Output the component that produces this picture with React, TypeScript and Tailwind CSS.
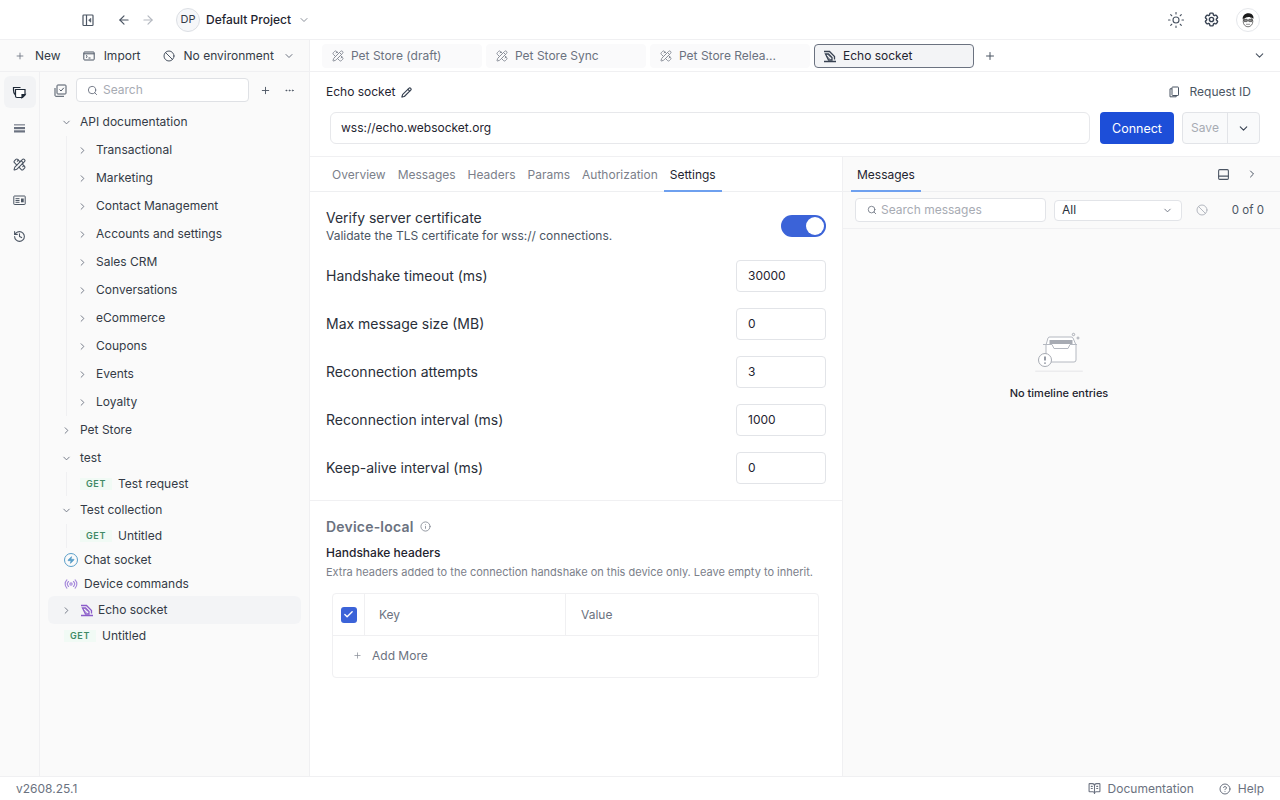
import { ChevronDown, ChevronRight, Plus, Ellipsis, ArrowLeft, ArrowRight, Search, Ban, Sun, CircleHelp, Info, Check, PanelBottom, Pencil, Radio, Zap, History, BookOpenText, PencilRuler } from "lucide-react"
import { HiOutlineCog6Tooth } from "react-icons/hi2"

const folders = ["Transactional", "Marketing", "Contact Management", "Accounts and settings", "Sales CRM", "Conversations", "eCommerce", "Coupons", "Events", "Loyalty"]
const specTabs = ["Pet Store (draft)", "Pet Store Sync", "Pet Store Relea..."]
const subTabs = ["Overview", "Messages", "Headers", "Params", "Authorization"]
const fields = [
  ["Handshake timeout (ms)", "30000"],
  ["Max message size (MB)", "0"],
  ["Reconnection attempts", "3"],
  ["Reconnection interval (ms)", "1000"],
  ["Keep-alive interval (ms)", "0"],
]

function SocketIcon({ className }: { className?: string }) {
  return (
    <svg width="14" height="14" viewBox="0 0 14 14" fill="none" stroke="currentColor" strokeWidth="1.300" className={className}>
      <path d="M1 2.500h5.500l5 5v3" />
      <path d="M2.500 5h3l3.500 3.500V11H5.500z" />
      <path d="M3.500 7l3 3M5 5.500l3 3" strokeWidth=".9" />
      <path d="M1 12.500h12" strokeWidth="1.500" />
    </svg>
  )
}

function SidebarToggleIcon() {
  return (
    <svg width="14" height="14" viewBox="0 0 14 14" fill="none" stroke="#4b5563" strokeWidth="1.200">
      <rect x="2" y="2" width="10" height="10.500" rx=".8" />
      <path d="M5.500 2v10.500" />
      <path d="M9.800 5.200v4L7.600 7.200z" fill="#4b5563" strokeWidth=".6" />
    </svg>
  )
}

function ImportIcon() {
  return (
    <svg width="12" height="12" viewBox="0 0 12 12" fill="none" stroke="#4b5563" strokeWidth="1">
      <rect x=".8" y="2" width="10.400" height="8" rx=".8" />
      <path d="M.8 3.800h10.400" />
      <path d="M3 5.300l1.300 1.200L3 7.700M5.500 8h2" />
    </svg>
  )
}

function CollectionsIcon() {
  return (
    <svg width="15" height="15" viewBox="0 1 15 15" fill="none" stroke="#1f2937" strokeWidth="1.200">
      <path d="M3 10.500C1.800 9.500 1.500 8 1.500 6V3.500h7" />
      <path d="M3.500 5.500h9.500v5.500l-2.500 2.500H5a1.500 1.500 0 0 1-1.500-1.500z" fill="#fff" />
      <path d="M13 10.500l-3 .1v3z" fill="#1f2937" />
    </svg>
  )
}

function BarsIcon() {
  return (
    <svg width="12" height="9" viewBox="0 0 12 9" fill="#6b7280">
      <rect y=".3" width="11" height="1.100" />
      <rect y="3" width="11" height="2.200" />
      <rect y="6.300" width="11" height="2.200" />
    </svg>
  )
}

function CardIcon() {
  return (
    <svg width="13" height="11" viewBox="0 0 13 11" fill="none" stroke="#4b5563" strokeWidth="1">
      <rect x=".8" y="1" width="11.400" height="8.500" rx=".6" />
      <path d="M2.500 3.700h4M2.500 5.500h4M2.500 7.300h4" />
      <rect x="8" y="3.500" width="2.700" height="3.800" fill="#4b5563" stroke="none" />
    </svg>
  )
}

function SelectAllIcon() {
  return (
    <svg width="13" height="13" viewBox="0 0 13 13" fill="none" stroke="#4b5563" strokeWidth="1">
      <path d="M1 4v7.500a.8.8 0 0 0 .8.8H10" />
      <rect x="3" y="1" width="9" height="9" rx=".8" />
      <path d="M5.500 5.500l1.500 1.500 2.800-3.200" />
    </svg>
  )
}

function RequestIdIcon() {
  return (
    <svg width="12" height="12" viewBox="0 0 12 12" fill="none" stroke="#4b5563" strokeWidth="1">
      <rect x="4" y="1" width="6.500" height="8.500" rx=".6" />
      <path d="M4 2.800H2v8h6.200V9.500" />
    </svg>
  )
}

function Avatar() {
  return (
    <svg width="16" height="16" viewBox="0 0 16 16">
      <ellipse cx="8" cy="9.500" rx="4.800" ry="5.300" fill="#fff" stroke="#555" strokeWidth=".8" />
      <path d="M2.800 7.500C2 3.500 5.500.8 9 1.200c3 .3 4.800 2.300 4.500 5.500-2-1.700-5.500-2.200-7.500-1.200-1.300.6-2.300 1-3.200 2z" fill="#1c1c1c" />
      <rect x="3.800" y="7.300" width="3.600" height="2.300" rx=".6" fill="#888" stroke="#222" strokeWidth=".6" />
      <rect x="8.600" y="7.300" width="3.600" height="2.300" rx=".6" fill="#888" stroke="#222" strokeWidth=".6" />
      <path d="M6 12.300h4" stroke="#777" strokeWidth=".8" />
    </svg>
  )
}

function GetBadge() {
  return (
    <span className="flex h-[12px] w-[32px] shrink-0 items-center justify-center bg-[#f1faf5] text-[9px] font-semibold tracking-[0.6px] text-[#3f8b66]">
      GET
    </span>
  )
}

function TopBar() {
  return (
    <div className="flex h-10 shrink-0 items-center border-b border-[#f0f0f2] bg-white pl-[81px] pr-[20px]">
      <SidebarToggleIcon />
      <ArrowLeft size={14} className="ml-[22px] text-[#4b5563]" />
      <ArrowRight size={14} className="ml-[10px] text-[#b4b8c0]" />
      <div className="ml-[21px] flex h-6 w-6 items-center justify-center rounded-full border border-[#dcdfe4] bg-[#f6f7f9] text-[11px] text-[#343a46]">DP</div>
      <span className="ml-[6px] text-[12px] font-medium text-[#1f2430]">Default Project</span>
      <ChevronDown size={12} className="ml-[7px] text-[#8b909a]" />
      <div className="flex-1" />
      <Sun size={18} strokeWidth={1.5} className="text-[#4b5563]" />
      <HiOutlineCog6Tooth size={17} strokeWidth={2} className="ml-[18px] text-[#374151]" />
      <div className="ml-[16px] flex h-6 w-6 items-center justify-center rounded-full border border-[#e5e7eb] bg-white">
        <Avatar />
      </div>
    </div>
  )
}

function Sidebar() {
  return (
    <div className="flex w-[310px] shrink-0 flex-col border-r border-[#f0f0f2] bg-[#fafafa] text-[12px] text-[#343a46]">
      <div className="flex h-8 shrink-0 items-center border-b border-[#f0f0f2] pl-[15px]">
        <Plus size={10} className="text-[#6b7280]" />
        <span className="ml-[10px]">New</span>
        <span className="ml-[22px]"><ImportIcon /></span>
        <span className="ml-[9px]">Import</span>
        <Ban size={12} className="ml-[22px] text-[#4b5563]" />
        <span className="ml-[9px]">No environment</span>
        <ChevronDown size={12} className="ml-[9px] text-[#6b7280]" />
      </div>
      <div className="flex min-h-0 flex-1">
        <div className="flex w-10 shrink-0 flex-col items-center border-r border-[#f0f0f2] pt-1 text-[#4b5563]">
          <div className="flex h-8 w-8 items-center justify-center rounded-md bg-[#f2f3f5]">
            <CollectionsIcon />
          </div>
          <div className="mt-[16px]"><BarsIcon /></div>
          <PencilRuler size={13} className="mt-[25px]" />
          <div className="mt-[24px]"><CardIcon /></div>
          <History size={13} className="mt-[24px]" />
        </div>
        <div className="min-w-0 flex-1">
          <div className="flex h-9 items-center pl-[14px]">
            <SelectAllIcon />
            <div className="ml-[9px] flex h-6 w-[173px] items-center rounded border border-[#dfe1e5] bg-white pl-[10px] text-[#a7abb3]">
              <Search size={11} className="text-[#6b7280]" />
              <span className="ml-[5px]">Search</span>
            </div>
            <Plus size={11} className="ml-[11px] text-[#4b5563]" />
            <Ellipsis size={11} className="ml-[13px] text-[#4b5563]" />
          </div>
          <Tree />
        </div>
      </div>
    </div>
  )
}

function Tree() {
  return (
    <div className="flex flex-col">
      <div className="flex h-7 items-center pl-[21px]">
        <ChevronDown size={11} className="text-[#6b7280]" />
        <span className="ml-[8px]">API documentation</span>
      </div>
      <div className="ml-[26px] flex flex-col border-l border-[#f0f0f2]">
        {folders.map((name) => (
          <div key={name} className="flex h-7 items-center pl-[10px]">
            <ChevronRight size={11} className="text-[#6b7280]" />
            <span className="ml-[8px]">{name}</span>
          </div>
        ))}
      </div>
      <div className="flex h-7 items-center pl-[21px]">
        <ChevronRight size={11} className="text-[#6b7280]" />
        <span className="ml-[8px]">Pet Store</span>
      </div>
      <div className="flex h-7 items-center pl-[21px]">
        <ChevronDown size={11} className="text-[#6b7280]" />
        <span className="ml-[8px]">test</span>
      </div>
      <div className="ml-[26px] flex h-6 items-center border-l border-[#f0f0f2] pl-[13px]">
        <GetBadge />
        <span className="ml-[6px]">Test request</span>
      </div>
      <div className="flex h-[28px] items-center pl-[21px]">
        <ChevronDown size={11} className="text-[#6b7280]" />
        <span className="ml-[8px]">Test collection</span>
      </div>
      <div className="ml-[26px] flex h-6 items-center border-l border-[#f0f0f2] pl-[13px]">
        <GetBadge />
        <span className="ml-[6px]">Untitled</span>
      </div>
      <div className="flex h-6 items-center pl-[24px]">
        <span className="flex h-[14px] w-[14px] items-center justify-center rounded-full border border-[#5a9fc9]">
          <Zap size={8} fill="#5a9fc9" className="text-[#5a9fc9]" />
        </span>
        <span className="ml-[6px]">Chat socket</span>
      </div>
      <div className="flex h-6 items-center pl-[24px]">
        <Radio size={14} className="text-[#a78bdc]" />
        <span className="ml-[6px]">Device commands</span>
      </div>
      <div className="ml-[8px] mr-2 flex h-7 items-center rounded-md bg-[#f3f4f6] pl-[13px]">
        <ChevronRight size={11} className="text-[#6b7280]" />
        <SocketIcon className="ml-[8px] text-[#8b5cc9]" />
        <span className="ml-[4px]">Echo socket</span>
      </div>
      <div className="flex h-6 items-center pl-[24px]">
        <GetBadge />
        <span className="ml-[6px]">Untitled</span>
      </div>
    </div>
  )
}

function TabStrip() {
  return (
    <div className="flex h-8 shrink-0 items-center gap-1 border-b border-[#f0f0f2] pl-3 pr-[14px]">
      {specTabs.map((name) => (
        <div key={name} className="flex h-6 w-[160px] items-center rounded bg-[#fafafb] pl-[10px] text-[12px] text-[#6b7280]">
          <PencilRuler size={12} className="text-[#8b909a]" />
          <span className="ml-[7px]">{name}</span>
        </div>
      ))}
      <div className="flex h-6 w-[160px] items-center rounded border border-[#6b7280] bg-[#f3f4f6] pl-[8px] text-[12px] text-[#1f2430]">
        <SocketIcon className="text-[#374151]" />
        <span className="ml-[6px]">Echo socket</span>
      </div>
      <Plus size={12} className="ml-[6px] text-[#4b5563]" />
      <div className="flex-1" />
      <ChevronDown size={13} className="text-[#4b5563]" />
    </div>
  )
}

function RequestHeader() {
  return (
    <div className="shrink-0 border-b border-[#f0f0f2] pb-3">
      <div className="flex h-10 items-center pl-4 pr-[29px]">
        <span className="text-[12px] text-[#1f2430]">Echo socket</span>
        <Pencil size={11} strokeWidth={2.5} className="ml-[6px] text-[#374151]" />
        <div className="flex-1" />
        <RequestIdIcon />
        <span className="ml-[10px] text-[12px] text-[#4b5563]">Request ID</span>
      </div>
      <div className="flex items-center pl-5 pr-5">
        <div className="flex h-8 flex-1 items-center rounded-md border border-[#e7e8eb] bg-white pl-[10px] text-[12px] text-[#1f2430]">
          wss://echo.websocket.org
        </div>
        <div className="ml-[10px] flex h-8 w-[74px] items-center justify-center rounded bg-[#1d4ed8] pt-[2px] text-[12.500px] text-white">Connect</div>
        <div className="ml-2 flex h-8 w-[78px] rounded border border-[#e2e4e8] bg-[#f9fafb]">
          <div className="flex w-[45px] items-center justify-center border-r border-[#e2e4e8] text-[12px] text-[#a7abb3]">Save</div>
          <div className="flex flex-1 items-center justify-center">
            <ChevronDown size={13} className="text-[#374151]" />
          </div>
        </div>
      </div>
    </div>
  )
}

function SettingsPane() {
  return (
    <div className="flex w-[533px] shrink-0 flex-col border-r border-[#f0f0f2]">
      <div className="flex h-[35px] shrink-0 items-stretch border-b border-[#eeeff1] pl-4 text-[12px] text-[#7b808a]">
        {subTabs.map((name) => (
          <div key={name} className="flex items-center px-[6px] pt-[2px]">{name}</div>
        ))}
        <div className="-mb-px flex items-center border-y-2 border-b-[#6ea0ef] border-t-transparent px-[6px] text-[#1f2430]">Settings</div>
      </div>
      <div className="flex items-center justify-between px-4 pt-4">
        <div>
          <div className="text-[14px] leading-[20px] text-[#2a2f3a]">Verify server certificate</div>
          <div className="text-[12px] leading-[16px] text-[#4b5563]">Validate the TLS certificate for wss:// connections.</div>
        </div>
        <div className="flex h-[22px] w-[45px] items-center justify-end rounded-full bg-[#3b63d8] pr-[2px]">
          <div className="h-[18px] w-[18px] rounded-full bg-white" />
        </div>
      </div>
      <div className="flex flex-col gap-4 px-4 pb-4 pt-[16px]">
        {fields.map(([label, value]) => (
          <div key={label} className="flex items-center justify-between">
            <span className="pb-[2px] text-[14px] text-[#2a2f3a]">{label}</span>
            <div className="flex h-8 w-[90px] items-center rounded border border-[#e2e4e8] pl-[11px] text-[12px] text-[#1f2430]">{value}</div>
          </div>
        ))}
      </div>
      <div className="border-t border-[#f0f0f2] px-4 pt-[15px]">
        <div className="flex items-center text-[14px] font-semibold tracking-[0.2px] text-[#6b7280]">
          Device-local
          <Info size={11} className="ml-[6px] text-[#8b909a]" />
        </div>
        <div className="mt-[7px] text-[12px] font-medium leading-[18px] text-[#1f2430]">Handshake headers</div>
        <div className="mt-[2px] text-[11px] leading-[16px] text-[#7b808a]">Extra headers added to the connection handshake on this device only. Leave empty to inherit.</div>
        <div className="ml-[6px] mt-[13px] w-[487px] rounded border border-[#f0f0f2] text-[12px] text-[#6b7280]">
          <div className="flex h-[42px] items-stretch border-b border-[#f0f0f2]">
            <div className="flex w-8 items-center justify-center border-r border-[#f0f0f2]">
              <span className="flex h-4 w-4 items-center justify-center rounded-[3px] bg-[#3b63d8]">
                <Check size={11} strokeWidth={3} className="text-white" />
              </span>
            </div>
            <div className="flex w-[201px] items-center border-r border-[#f0f0f2] pl-[14px]">Key</div>
            <div className="flex flex-1 items-center pl-[15px]">Value</div>
          </div>
          <div className="flex h-[41px] items-center pb-[2px] pl-[20px]">
            <Plus size={9} className="text-[#8b909a]" />
            <span className="ml-[10px]">Add More</span>
          </div>
        </div>
      </div>
    </div>
  )
}

function MessagesPane() {
  return (
    <div className="flex min-w-0 flex-1 flex-col bg-[#fafafa]">
      <div className="flex h-[35px] shrink-0 items-stretch border-b border-[#eeeff1] pl-[8px] pr-[22px]">
        <div className="-mb-px flex items-center border-y-2 border-b-[#6ea0ef] border-t-transparent px-[6px] text-[12px] text-[#1f2430]">Messages</div>
        <div className="flex-1" />
        <div className="flex items-center">
          <PanelBottom size={13} className="text-[#4b5563]" />
          <ChevronRight size={12} className="ml-[16px] text-[#4b5563]" />
        </div>
      </div>
      <div className="flex h-[37px] shrink-0 items-center border-b border-[#f0f0f2] pl-3 pr-4 text-[12px]">
        <div className="flex h-6 w-[191px] items-center rounded border border-[#e2e4e8] bg-white pl-[11px] text-[#a7abb3]">
          <Search size={10} className="text-[#6b7280]" />
          <span className="ml-[4px]">Search messages</span>
        </div>
        <div className="ml-[8px] flex h-[21px] w-[128px] items-center justify-between rounded border border-[#e2e4e8] bg-white pl-[7px] pr-[8px] text-[#2a2f3a]">
          All
          <ChevronDown size={11} className="text-[#6b7280]" />
        </div>
        <Ban size={12} className="ml-[14px] text-[#b4b8c0]" />
        <div className="flex-1" />
        <span className="pt-[2px] text-[11.500px] text-[#4b5563]">0 of 0</span>
      </div>
      <div className="flex flex-col items-center pr-[5px] pt-[103px]">
        <svg width="52" height="42" viewBox="0 0 52 42" fill="none">
          <path d="M13 13l2-7a2 2 0 0 1 2-1h21a2 2 0 0 1 2 1l3 7v15a2 2 0 0 1-2 2H15a2 2 0 0 1-2-2z" fill="#fff" stroke="#b4b8c0" />
          <rect x="16.500" y="8" width="23" height="4" fill="#a7abb3" />
          <path d="M10 12.500h9l2 4h14l2-4h7" stroke="#b4b8c0" />
          <circle cx="40.500" cy="2.500" r="1.200" stroke="#a7abb3" />
          <circle cx="45" cy="6" r="1" stroke="#a7abb3" />
          <circle cx="12" cy="28" r="6.500" fill="#fff" stroke="#a7abb3" />
          <path d="M12 24.500v4M12 30.500v1.200" stroke="#6b7280" strokeWidth="1.400" />
          <rect x="2" y="38.500" width="48" height="1.500" rx=".7" fill="#ececee" />
        </svg>
        <span className="mt-[11px] text-[11px] font-medium text-[#1f2430]">No timeline entries</span>
      </div>
    </div>
  )
}

function Footer() {
  return (
    <div className="flex h-6 shrink-0 items-center border-t border-[#f0f0f2] bg-white pl-4 pr-4 text-[12px] text-[#6b7280]">
      v2608.25.1
      <div className="flex-1" />
      <BookOpenText size={13} className="text-[#6b7280]" />
      <span className="ml-[7px]">Documentation</span>
      <CircleHelp size={12} className="ml-[25px] text-[#6b7280]" />
      <span className="ml-[7px]">Help</span>
    </div>
  )
}

export default function App() {
  return (
    <div className="flex h-[800px] w-[1280px] flex-col overflow-hidden bg-white font-['Inter',sans-serif]">
      <TopBar />
      <div className="flex min-h-0 flex-1">
        <Sidebar />
        <div className="flex min-w-0 flex-1 flex-col">
          <TabStrip />
          <RequestHeader />
          <div className="flex min-h-0 flex-1">
            <SettingsPane />
            <MessagesPane />
          </div>
        </div>
      </div>
      <Footer />
    </div>
  )
}
